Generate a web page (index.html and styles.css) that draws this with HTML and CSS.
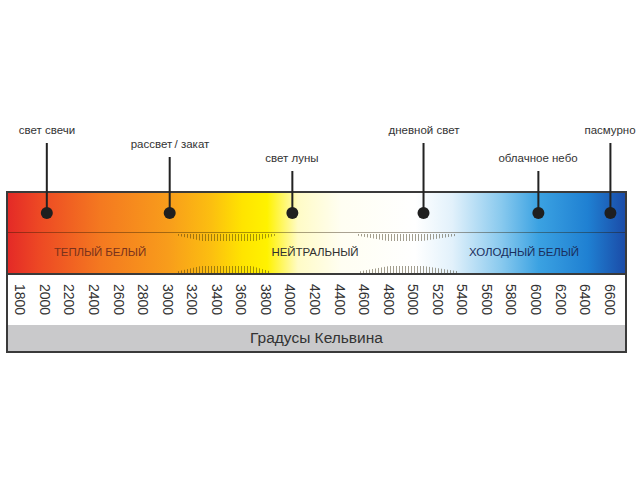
FILE: index.html
```html
<!DOCTYPE html>
<html lang="ru">
<head>
<meta charset="utf-8">
<title>Цветовая температура</title>
<link rel="stylesheet" href="styles.css">
</head>
<body>
<div class="stage">
  <div class="pins">
    <div class="pin pin-candle"><span class="pin-label">свет свечи</span><span class="stem"></span><span class="dot"></span></div>
    <div class="pin pin-sunrise"><span class="pin-label">рассвет&thinsp;/ закат</span><span class="stem"></span><span class="dot"></span></div>
    <div class="pin pin-moon"><span class="pin-label">свет луны</span><span class="stem"></span><span class="dot"></span></div>
    <div class="pin pin-day"><span class="pin-label">дневной свет</span><span class="stem"></span><span class="dot"></span></div>
    <div class="pin pin-cloudy"><span class="pin-label">облачное небо</span><span class="stem"></span><span class="dot"></span></div>
    <div class="pin pin-overcast"><span class="pin-label">пасмурно</span><span class="stem"></span><span class="dot"></span></div>
  </div>

  <div class="chart">
    <div class="spectrum">
      <div class="spectrum-top"></div>
      <div class="spectrum-bottom">
        <span class="zone zone-warm">ТЕПЛЫЙ БЕЛЫЙ</span>
        <span class="zone zone-neutral">НЕЙТРАЛЬНЫЙ</span>
        <span class="zone zone-cold">ХОЛОДНЫЙ БЕЛЫЙ</span>
      </div>
      <span class="hatch hatch-top hatch-a-top"></span>
      <span class="hatch hatch-bottom hatch-a-bottom"></span>
      <span class="hatch hatch-top hatch-b-top"></span>
      <span class="hatch hatch-bottom hatch-b-bottom"></span>
    </div>
    <div class="scale">
      <span class="num">1800</span><span class="num">2000</span><span class="num">2200</span><span class="num">2400</span><span class="num">2600</span>
      <span class="num">2800</span><span class="num">3000</span><span class="num">3200</span><span class="num">3400</span><span class="num">3600</span>
      <span class="num">3800</span><span class="num">4000</span><span class="num">4200</span><span class="num">4400</span><span class="num">4600</span>
      <span class="num">4800</span><span class="num">5000</span><span class="num">5200</span><span class="num">5400</span><span class="num">5600</span>
      <span class="num">5800</span><span class="num">6000</span><span class="num">6200</span><span class="num">6400</span><span class="num">6600</span>
    </div>
    <div class="units">Градусы Кельвина</div>
  </div>
</div>
</body>
</html>
```

FILE: styles.css
```css
* { box-sizing: border-box; }

html, body {
  margin: 0;
  padding: 0;
  background: #ffffff;
}

body {
  font-family: "Liberation Sans", Arial, sans-serif;
  color: #333333;
  width: 640px;
  height: 480px;
  overflow: hidden;
}

.stage {
  position: relative;
  padding-top: 191px;
  padding-left: 6px;
}

/* callout pins on the scale */
.pins {
  position: absolute;
  left: 0;
  top: 0;
  width: 640px;
  height: 219px;
  z-index: 2;
  pointer-events: none;
}

.pin {
  position: absolute;
  bottom: 0;
  display: flex;
  flex-direction: column;
  align-items: center;
  transform: translateX(-50%);
}

.pin-label {
  font-size: 11.5px;
  line-height: 13px;
  white-space: nowrap;
  color: #333333;
  margin-bottom: 6px;
}

.stem {
  flex: 1;
  width: 2px;
  background: #222222;
}

.dot {
  width: 12px;
  height: 12px;
  border-radius: 50%;
  background: #1f1f1f;
  margin-top: -6px;
}

.pin-candle   { left: 47px;  top: 124px; }
.pin-sunrise  { left: 170px; top: 138px; }
.pin-moon     { left: 292px; top: 152px; }
.pin-day      { left: 424px; top: 124px; }
.pin-cloudy   { left: 538px; top: 152px; }
.pin-overcast { left: 610px; top: 124px; }

/* chart box */
.chart {
  width: 621px;
  border: 2px solid #3a3a3a;
  display: flex;
  flex-direction: column;
}

.spectrum {
  position: relative;
  height: 82px;
  border-bottom: 2px solid #3a3a3a;
  background: linear-gradient(90deg,
    #e42a27 0%,
    #ed4824 5%,
    #f47920 15%,
    #f89d1b 26%,
    #fcbf10 33%,
    #ffe400 38%,
    #fff200 42%,
    #fffbc6 47%,
    #fffef2 54%,
    #ffffff 66%,
    #e2f1fb 72%,
    #88c9ee 80%,
    #3ba2e2 86%,
    #1f80d2 94%,
    #1b4ca8 100%);
}

.spectrum-top {
  height: 40px;
  border-bottom: 1px solid rgba(40, 25, 0, 0.4);
}

.spectrum-bottom {
  height: 39px;
  display: grid;
  grid-template-columns: 184px 246px 172px;
  align-items: center;
  justify-items: center;
}

.zone {
  font-size: 11.5px;
  line-height: 13px;
  white-space: nowrap;
  letter-spacing: -0.1px;
}

.zone-warm    { color: #7a321c; }
.zone-neutral { color: #303030; }
.zone-cold    { color: #1a2e5c; }

.hatch {
  position: absolute;
  height: 7px;
  background: repeating-linear-gradient(90deg,
    rgba(50, 40, 10, 0.45) 0 1px,
    transparent 1px 3px);
}

.hatch-top {
  top: 41px;
  clip-path: polygon(0 0, 100% 0, 100% 25%, 80% 100%, 25% 100%, 0 25%);
}

.hatch-bottom {
  bottom: 0;
  clip-path: polygon(0 75%, 25% 0, 80% 0, 100% 75%, 100% 100%, 0 100%);
}

.hatch-a-top    { left: 170px; width: 97px; }
.hatch-a-bottom { left: 170px; width: 92px; }
.hatch-b-top    { left: 350px; width: 99px; clip-path: polygon(0 0, 100% 0, 100% 25%, 65% 100%, 30% 100%, 0 25%); }
.hatch-b-bottom { left: 352px; width: 98px; clip-path: polygon(0 75%, 30% 0, 65% 0, 100% 75%, 100% 100%, 0 100%); }

/* kelvin numbers */
.scale {
  height: 50px;
  display: grid;
  grid-template-columns: repeat(25, 1fr);
  padding-right: 3px;
  background: #ffffff;
}

.num {
  writing-mode: vertical-rl;
  font-size: 14px;
  line-height: 1;
  color: #333333;
  display: flex;
  align-items: center;
  justify-content: center;
  justify-self: center;
  align-self: center;
}

.units {
  height: 26px;
  background: #c9c9cb;
  display: flex;
  align-items: center;
  justify-content: center;
  font-size: 15.5px;
  color: #333333;
}
```
